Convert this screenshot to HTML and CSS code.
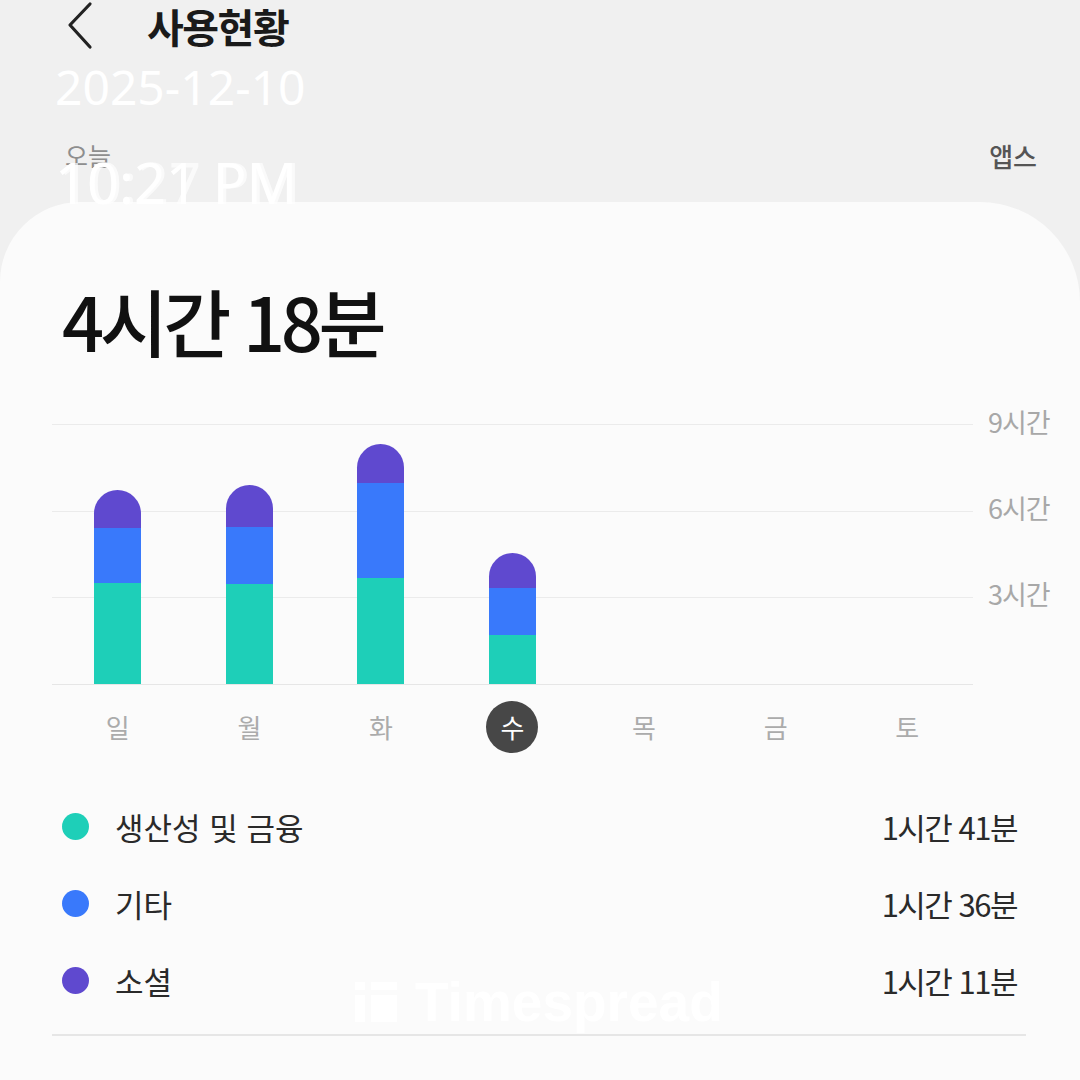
FILE: index.html
```html
<!DOCTYPE html>
<html lang="ko">
<head>
  <meta charset="UTF-8" />
  <title>사용현황</title>
  <link rel="stylesheet" href="styles.css">
</head>
<body>

  <div class="header">
    <svg class="back" width="30" height="50" viewBox="0 0 30 50">
      <polyline points="25,3 5,24 25,46" fill="none" stroke="#222" stroke-width="3.2" stroke-linecap="round" stroke-linejoin="round"/>
    </svg>
    <h1>사용현황</h1>
  </div>

  <div class="subrow">
    <span class="today">오늘</span>
    <span class="apps">앱스</span>
  </div>

  <div class="stamp">
    <div class="stamp-date">2025-12-10</div>
    <div class="stamp-time">
      <span>10:21 PM</span>
      <span class="ghost">10:27 PM</span>
    </div>
  </div>

  <div class="card">
    <div class="total">4시간 18분</div>

    <div class="chart">
      <div class="plot">
        <div class="col">
          <div class="bar">
            <div class="seg social" style="height: 38px"></div>
            <div class="seg other" style="height: 55px"></div>
            <div class="seg prod" style="height: 101px"></div>
          </div>
        </div>
        <div class="col">
          <div class="bar">
            <div class="seg social" style="height: 42px"></div>
            <div class="seg other" style="height: 57px"></div>
            <div class="seg prod" style="height: 100px"></div>
          </div>
        </div>
        <div class="col">
          <div class="bar">
            <div class="seg social" style="height: 39px"></div>
            <div class="seg other" style="height: 95px"></div>
            <div class="seg prod" style="height: 106px"></div>
          </div>
        </div>
        <div class="col">
          <div class="bar">
            <div class="seg social" style="height: 35px"></div>
            <div class="seg other" style="height: 47px"></div>
            <div class="seg prod" style="height: 49px"></div>
          </div>
        </div>
        <div class="col"></div>
        <div class="col"></div>
        <div class="col"></div>
      </div>
      <div class="axis">
        <span>9시간</span>
        <span>6시간</span>
        <span>3시간</span>
      </div>
    </div>

    <div class="days">
      <span>일</span>
      <span>월</span>
      <span>화</span>
      <span class="active">수</span>
      <span>목</span>
      <span>금</span>
      <span>토</span>
    </div>

    <ul class="legend">
      <li><i class="dot prod"></i><span class="name">생산성 및 금융</span><span class="time">1시간 41분</span></li>
      <li><i class="dot other"></i><span class="name">기타</span><span class="time">1시간 36분</span></li>
      <li><i class="dot social"></i><span class="name">소셜</span><span class="time">1시간 11분</span></li>
    </ul>

    <div class="divider"></div>

    <div class="watermark">
      <svg width="42" height="40" viewBox="0 0 42 40">
        <rect x="0" y="0" width="10" height="8" fill="#fff"/>
        <rect x="0" y="13" width="10" height="27" fill="#fff"/>
        <rect x="16" y="0" width="26" height="8" fill="#fff"/>
        <rect x="16" y="13" width="26" height="27" fill="#fff"/>
      </svg>
      <span>Timespread</span>
    </div>
  </div>

</body>
</html>
```

FILE: styles.css
```css
body {
  margin: 0;
  width: 1080px;
  height: 1080px;
  overflow: hidden;
  background-color: #f0f0f0;
  font-family: "Noto Sans CJK KR", "Noto Sans", sans-serif;
  color: #222;
  position: relative;
}

.header {
  display: flex;
  align-items: center;
  height: 52px;
  padding-left: 65px;
}

.back {
  display: block;
}

.header h1 {
  margin: 0 0 0 52px;
  font-size: 40px;
  font-weight: 700;
  letter-spacing: -1.5px;
  line-height: 52px;
  color: #1a1a1a;
}

.subrow {
  display: flex;
  justify-content: space-between;
  align-items: center;
  height: 30px;
  margin-top: 88px;
  padding: 0 43px 0 65px;
}

.today {
  font-size: 25px;
  color: #8e8e8e;
}

.apps {
  font-size: 26px;
  font-weight: 500;
  color: #555;
}

.stamp {
  position: absolute;
  left: 55px;
  top: 58px;
  color: #fff;
  font-family: "Noto Sans", sans-serif;
  z-index: 2;
}

.stamp-date {
  font-size: 48px;
  line-height: 58px;
}

.stamp-time {
  position: relative;
  margin-top: 34px;
  font-size: 56px;
  line-height: 64px;
}

.stamp-time .ghost {
  position: absolute;
  left: 3px;
  top: 0;
  opacity: 0.7;
}

.card {
  position: relative;
  box-sizing: border-box;
  margin-top: 32px;
  height: 878px;
  background-color: #fbfbfb;
  border-radius: 80px 100px 0 0;
  padding: 78px 12px 0 52px;
}

.total {
  font-size: 74px;
  font-weight: 500;
  letter-spacing: -4.5px;
  line-height: 80px;
  color: #111;
  margin-left: 10px;
}

.chart {
  display: grid;
  grid-template-columns: 921px 1fr;
  column-gap: 15px;
  margin-top: 64px;
}

.plot {
  display: grid;
  grid-template-columns: repeat(7, 1fr);
  align-items: end;
  height: 261px;
  background:
    linear-gradient(#ebebeb, #ebebeb) 0 0 / 100% 1px no-repeat,
    linear-gradient(#ebebeb, #ebebeb) 0 87px / 100% 1px no-repeat,
    linear-gradient(#ebebeb, #ebebeb) 0 173px / 100% 1px no-repeat,
    linear-gradient(#e6e6e6, #e6e6e6) 0 260px / 100% 1px no-repeat;
}

.col {
  display: flex;
  justify-content: center;
  padding-bottom: 1px;
}

.bar {
  display: flex;
  flex-direction: column;
  width: 47px;
}

.seg.social {
  border-radius: 24px 24px 0 0;
}

.prod { background-color: #1ecfb8; }
.other { background-color: #3979fb; }
.social { background-color: #5f49cf; }

.axis {
  display: flex;
  flex-direction: column;
  margin-top: -16px;
}

.axis span {
  height: 86px;
  line-height: 28px;
  font-size: 27px;
  color: #a8a8a8;
  letter-spacing: -1px;
}

.days {
  display: grid;
  grid-template-columns: repeat(7, 1fr);
  width: 921px;
  margin-top: 16px;
}

.days span {
  justify-self: center;
  width: 52px;
  height: 52px;
  line-height: 52px;
  text-align: center;
  font-size: 26px;
  color: #ababab;
  border-radius: 50%;
}

.days .active {
  background-color: #474747;
  color: #fff;
}

.legend {
  list-style: none;
  margin: 35px 0 0;
  padding: 0 51px 0 10px;
}

.legend li {
  display: flex;
  align-items: center;
  height: 77px;
  font-size: 31px;
  color: #2a2a2a;
}

.dot {
  width: 27px;
  height: 27px;
  border-radius: 50%;
  margin-right: 26px;
}

.legend .name {
  flex: 1;
}

.legend .time {
  letter-spacing: -1.5px;
}

.divider {
  height: 2px;
  margin: 15px 42px 0 0;
  background-color: #e6e6e6;
}

.watermark {
  position: absolute;
  left: 355px;
  top: 768px;
  display: flex;
  align-items: center;
  gap: 18px;
  color: #fff;
  font-family: "Liberation Sans", Arial, sans-serif;
  font-weight: 700;
  font-size: 55px;
}
```
